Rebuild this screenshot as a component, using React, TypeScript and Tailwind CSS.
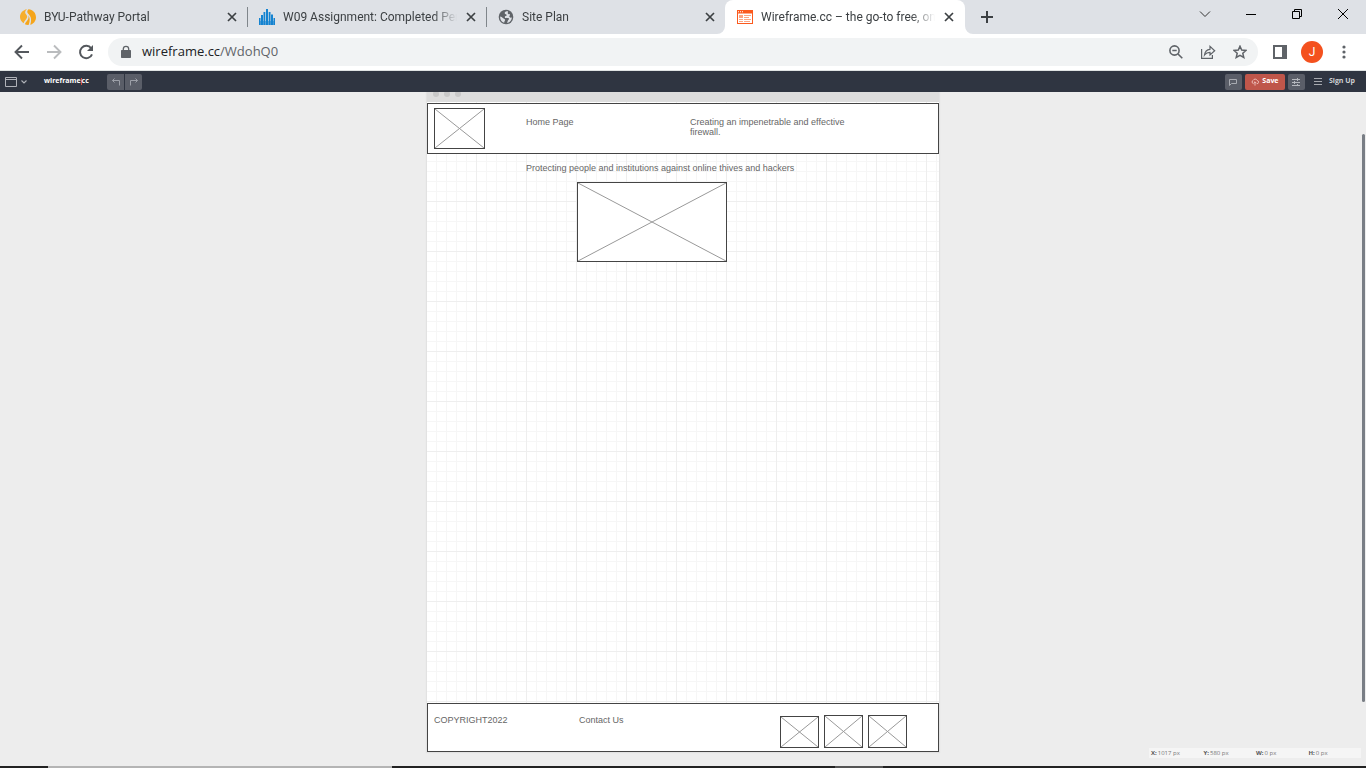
import type { ReactNode } from "react";

type TabProps = { title: string; icon: ReactNode; active?: boolean; separator?: boolean };

function CloseGlyph() {
  return (
    <svg width="10" height="10" viewBox="0 0 10 10" fill="none" stroke="#3c4043" strokeWidth="1.700">
      <path d="M1 1l8 8M9 1l-8 8" />
    </svg>
  );
}

function Tab({ title, icon, active, separator }: TabProps) {
  return (
    <div
      role="tab"
      aria-selected={!!active}
      className={
        active
          ? "relative flex h-full w-60 min-w-0 items-center rounded-t-lg bg-white pr-2.5 pl-3"
          : "relative flex h-full w-[239px] min-w-0 items-center pr-[9px] pl-3"
      }
    >
      <span className="mr-2 flex size-4 shrink-0 items-center justify-center">{icon}</span>
      <span
        className={
          "min-w-0 flex-1 whitespace-nowrap font-['Roboto',sans-serif] text-xs text-[#3c4043] " +
          "[mask-image:linear-gradient(to_right,black_calc(100%-24px),transparent)]"
        }
      >
        {title}
      </span>
      <button aria-label={`Close ${title}`} className="ml-2 flex size-3 shrink-0 items-center justify-center">
        <CloseGlyph />
      </button>
      {separator && <span className="absolute top-[7px] -right-px h-5 w-px bg-[#80868b]" />}
      {active && (
        <>
          <svg className="absolute bottom-0 -left-2" width="8" height="8" viewBox="0 0 8 8">
            <path d="M8 0v8H0a8 8 0 0 0 8-8z" fill="#fff" />
          </svg>
          <svg className="absolute -right-2 bottom-0" width="8" height="8" viewBox="0 0 8 8">
            <path d="M0 0v8h8a8 8 0 0 1-8-8z" fill="#fff" />
          </svg>
        </>
      )}
    </div>
  );
}

function PathwayIcon() {
  return (
    <svg width="16" height="16" viewBox="0 0 16 16">
      <path d="M3.600 14.300A8 8 0 0 1 0 8C0 4 3 .8 7 .2 4.800 2 4.600 3.700 6.200 5.600c1.500 1.800 1.300 3.300-.5 5.200-1.100 1.200-1.800 2.200-2.100 3.500z" fill="#f6ae2d" />
      <path d="M8.500.2C12.700.3 16 3.800 16 8.200c0 3.800-2.500 6.800-5.800 7.600 1.900-5.600.6-8.700-2.200-11.400C6.900 3.200 7 1.600 8.500.2z" fill="#f5a51b" />
      <path d="M8.300 6.200c1.800 2.300 1.900 5.600.3 9.700-1.300.1-2.500-.1-3.700-.6.500-1.600 1.300-2.500 2.300-3.800 1.400-1.800 1.700-3.400 1.100-5.300z" fill="#f5a51b" />
    </svg>
  );
}

function BarsIcon() {
  return (
    <svg width="16" height="16" viewBox="0 0 16 16" fill="#1583d0">
      <path d="M0 9h1.500v7H0zM2 6h2v10H2zM4.500 3h1.800v13H4.500zM7 0h2v16H7zM9.700 3h1.800v13H9.700zM12 5.500h2V16h-2zM14.500 9H16v7h-1.500z" />
      <path d="M0 12h16v4H0z" fillOpacity=".55" />
    </svg>
  );
}

function GlobeIcon() {
  return (
    <svg width="16" height="16" viewBox="0 0 16 16">
      <circle cx="8" cy="8" r="7.300" fill="#5f6368" />
      <path d="M8.800 2.200c-1.800.5-2.300 1.300-2 2.400.4 1 1.800.5 1.900 1.600.1.900-1.900.5-1.900 1.900 0 1 1.800.8 3.200.8 1.200 0 1.400 1.200.5 1.900-.8.700-.8 1.800-1.500 3.300 2.700-.5 4.700-2.800 4.900-5.600-.9.300-2.100.2-2.500-.7-.4-1 .9-1.300.6-2.300-.300-.8-1.900-.1-2.200-1.100-.2-.8.400-1.300.1-2.100zM2.100 7.400c1 .2 2.300.8 3.200 1.900.7.900 1.800.7 1.800 1.800 0 .9-.9 1.100-.9 2.600C3.700 12.900 2 10.700 2.100 7.400z" fill="#dee1e6" />
    </svg>
  );
}

function WireframeIcon() {
  return (
    <svg width="16" height="14" viewBox="0 0 16 14">
      <path d="M0 0h16v14H0z" fill="#fb5a1e" />
      <path d="M1 3.500h14V13H1z" fill="#fff" />
      <path d="M1 1.300h1v1H1zM3 1.300h1v1H3zM5 1.300h1v1H5z" fill="#fff" />
      <path d="M2 5h4v3H2zM7 5h7v1H7zM7 7h5v1H7zM2 9h4v1H2zM7 9h7v1H7zM2 11h4v1H2zM7 11h6v1H7z" fill="#fca582" />
    </svg>
  );
}

function WindowControls() {
  const cell = "flex w-[46px] items-center justify-center";
  return (
    <div className="ml-auto flex h-7 shrink-0">
      <button aria-label="Search tabs" className={cell}>
        <svg width="12" height="12" viewBox="0 0 12 12" fill="none" stroke="#333"><path d="M1 3.500l5 5 5-5" /></svg>
      </button>
      <button aria-label="Minimize" className={cell}>
        <svg width="10" height="10" viewBox="0 0 10 10"><path d="M0 5h10v1H0z" fill="#000" /></svg>
      </button>
      <button aria-label="Restore" className={cell}>
        <svg width="10" height="10" viewBox="0 0 10 10" fill="none" stroke="#000"><path d="M.5 2.500h7v7h-7zM2.500 2.500v-2h7v7h-2" /></svg>
      </button>
      <button aria-label="Close window" className={cell}>
        <svg width="10" height="10" viewBox="0 0 10 10" fill="none" stroke="#000"><path d="M0 0l10 10M10 0L0 10" /></svg>
      </button>
    </div>
  );
}

function TabStrip() {
  return (
    <div className="flex h-[34px] shrink-0 bg-[#dee1e6] pl-2">
      <div role="tablist" className="flex h-full min-w-0">
        <Tab title="BYU-Pathway Portal" icon={<PathwayIcon />} separator />
        <Tab title="W09 Assignment: Completed Per" icon={<BarsIcon />} separator />
        <Tab title="Site Plan" icon={<GlobeIcon />} />
        <Tab title="Wireframe.cc – the go-to free, on" icon={<WireframeIcon />} active />
      </div>
      <button aria-label="New tab" className="ml-2 flex w-7 items-center justify-center">
        <svg width="12" height="12" viewBox="0 0 12 12"><path d="M5 0h2v5h5v2H7v5H5V7H0V5h5z" fill="#3c4043" /></svg>
      </button>
      <WindowControls />
    </div>
  );
}

function AddressBar() {
  const cell = "flex size-8 shrink-0 items-center justify-center";
  return (
    <div className="flex h-9 shrink-0 items-center bg-white px-1.5">
      <button aria-label="Back" className={cell}>
        <svg width="16" height="16" viewBox="0 0 16 16" fill="none" stroke="#54585d" strokeWidth="1.900"><path d="M15 8H2M8 1.500L1.500 8 8 14.500" /></svg>
      </button>
      <button aria-label="Forward" className={cell}>
        <svg width="16" height="16" viewBox="0 0 16 16" fill="none" stroke="#babcbe" strokeWidth="1.900"><path d="M1 8h13M8 1.500L14.500 8 8 14.500" /></svg>
      </button>
      <button aria-label="Reload" className={cell}>
        <svg width="16" height="16" viewBox="0 0 16 16"><path d="M13.200 4.300A6.200 6.200 0 1 0 14 10.300" fill="none" stroke="#54585d" strokeWidth="2" /><path d="M15 1v6H9z" fill="#54585d" /></svg>
      </button>
      <div className="mx-1.5 flex h-7 min-w-0 flex-1 items-center rounded-full bg-[#f1f3f4] pr-0.5 pl-3">
        <svg className="mr-2.5 shrink-0" width="12" height="14" viewBox="0 0 12 14"><path d="M2 5h8c.7 0 1 .4 1 1v6c0 .7-.4 1-1 1H2c-.7 0-1-.4-1-1V6c0-.7.4-1 1-1z" fill="#5f6368" /><path d="M3.300 5.500V4a2.700 2.700 0 0 1 5.400 0v1.500" fill="none" stroke="#5f6368" strokeWidth="1.300" /></svg>
        <a href="#page" className="mr-auto text-[13px] text-[#202124]">
          wireframe.cc<span className="text-[#5f6368]">/WdohQ0</span>
        </a>
        <button aria-label="Zoom" className={cell}>
          <svg width="14" height="14" viewBox="0 0 14 14" fill="none" stroke="#5f6368" strokeWidth="1.600"><circle cx="5.500" cy="5.500" r="4.600" /><path d="M9 9l4.300 4.300M3.300 5.500h4.400" /></svg>
        </button>
        <button aria-label="Share" className={cell}>
          <svg width="16" height="16" viewBox="0 0 16 16" fill="none" stroke="#5f6368" strokeWidth="1.200"><path d="M1.600 5v9.400h10.800V11" /><path d="M4.500 11C5 7 7 5.500 10 5.300V2.300L14.700 6.800 10 11V8.300C7.500 8.300 6 9 4.500 11z" /></svg>
        </button>
        <button aria-label="Bookmark" className={cell}>
          <svg width="14" height="14" viewBox="0 0 14 14" fill="none" stroke="#5f6368" strokeWidth="1.500"><path d="M7 1.200l1.700 3.900 4.300.4-3.200 2.800 1 4.200L7 10.300l-3.800 2.200 1-4.200L1 5.500l4.300-.4z" /></svg>
        </button>
      </div>
      <button aria-label="Side panel" className={cell}>
        <svg width="14" height="14" viewBox="0 0 14 14"><path d="M0 0h14v14H0zM2 2v10h7V2z" fill="#5f6368" fillRule="evenodd" /></svg>
      </button>
      <button aria-label="Profile" className={cell}>
        <span className="flex size-[22px] items-center justify-center rounded-full bg-[#f4511e] font-['Roboto',sans-serif] text-xs text-white">J</span>
      </button>
      <button aria-label="Menu" className={cell}>
        <svg width="4" height="14" viewBox="0 0 4 14" fill="#5f6368"><circle cx="2" cy="2" r="1.600" /><circle cx="2" cy="7" r="1.600" /><circle cx="2" cy="12" r="1.600" /></svg>
      </button>
    </div>
  );
}

function AppBar() {
  const tool = "flex h-4 w-[17px] items-center justify-center bg-[#5a5e68]";
  return (
    <div className="flex h-[22px] shrink-0 items-center border-t border-[#dfe3e3] bg-[#2f3541] pr-[11px] pl-[5px]">
      <button aria-label="Device" className="flex items-center gap-1">
        <svg width="12" height="10" viewBox="0 0 12 10" fill="none" stroke="#b0b3b9"><path d="M.5.500h11v9H.5zM.5 2.500h11" /></svg>
        <svg width="6" height="4" viewBox="0 0 6 4" fill="none" stroke="#b0b3b9" strokeWidth="1.100"><path d="M.5.500L3 3 5.500.500" /></svg>
      </button>
      <a href="#home" className="ml-4 flex w-16 shrink-0 items-center pl-px text-[7px] font-bold text-white">
        wireframe<span className="h-[7px] w-px bg-[#d8503c]" />cc
      </a>
      <div className="flex gap-px overflow-hidden rounded-xs">
        <button aria-label="Undo" className={tool}>
          <svg width="8" height="8" viewBox="0 0 8 8" fill="none" stroke="#9da0a8"><path d="M2.500.500l-2 2 2 2M.5 2.500h7v5" /></svg>
        </button>
        <button aria-label="Redo" className={tool}>
          <svg width="8" height="8" viewBox="0 0 8 8" fill="none" stroke="#9da0a8"><path d="M5.500.500l2 2-2 2M7.500 2.500h-7v5" /></svg>
        </button>
      </div>
      <div className="ml-auto flex items-center gap-[3px]">
        <button aria-label="Comments" className={tool + " rounded-xs"}>
          <svg width="8" height="8" viewBox="0 0 8 8" fill="none" stroke="#a9acb2"><path d="M.5 1.500h7v4h-5l-2 2z" /></svg>
        </button>
        <button className="flex h-4 w-10 items-center justify-center gap-[3px] rounded-xs bg-[#bf564a] text-[7px] font-bold text-white">
          <svg width="8" height="8" viewBox="0 0 8 8" fill="none" stroke="#f0c4bf" strokeWidth=".9"><path d="M2.500 5.700a1.800 1.800 0 0 1-.3-3.400A2.200 2.200 0 0 1 6.200 2.500a1.600 1.600 0 0 1-.5 3.200M4 7.600V3.800M2.700 5.100L4 3.800l1.300 1.300" /></svg>
          Save
        </button>
        <button aria-label="Settings" className={tool + " rounded-xs"}>
          <svg width="8" height="8" viewBox="0 0 8 8" stroke="#b5b8bd"><path d="M0 1.500h8M0 4.500h8M0 7.500h8M5.500 0v3M2.500 3v3M5.500 6v2" /></svg>
        </button>
        <button aria-label="Open menu" className="ml-1 flex w-3 justify-center">
          <svg width="8" height="7" viewBox="0 0 8 7" fill="#a6a9af"><path d="M0 0h8v1H0zM0 3h8v1H0zM0 6h8v1H0z" /></svg>
        </button>
        <a href="#signup" className="ml-0.5 text-[7px] font-bold text-[#cfd1d4]">Sign Up</a>
      </div>
    </div>
  );
}

function ImageBox({ className }: { className: string }) {
  return (
    <div className={"absolute border border-[#444] bg-white " + className}>
      <svg className="block size-full" viewBox="0 0 100 100" preserveAspectRatio="none" stroke="#999" fill="none">
        <path d="M0 0l100 100M100 0L0 100" vectorEffect="non-scaling-stroke" />
      </svg>
    </div>
  );
}

/* Elements on the sheet sit at the coordinates the user dragged them to. */
function Sheet() {
  const label = "absolute text-[9px] leading-[10px] text-[#666]";
  return (
    <main
      id="page"
      className="mx-auto w-[512px] shadow-[0_0_1px_1px_#e2e2e2] font-['Liberation_Sans',Arial,sans-serif]"
    >
      <div className="flex h-2.5 items-start gap-[5px] overflow-hidden bg-[#ddd] pl-1.5">
        <span className="-mt-px size-1.5 rounded-full bg-[#c8c8c8]" />
        <span className="-mt-px size-1.5 rounded-full bg-[#c8c8c8]" />
        <span className="-mt-px size-1.5 rounded-full bg-[#c8c8c8]" />
      </div>
      <div className="relative h-[650px] bg-white bg-[linear-gradient(to_right,transparent_49px,#eeeeee_49px),linear-gradient(to_bottom,transparent_49px,#eeeeee_49px),linear-gradient(to_right,transparent_9px,#f6f6f6_9px),linear-gradient(to_bottom,transparent_9px,#f6f6f6_9px)] bg-[length:50px_50px,50px_50px,10px_10px,10px_10px]">
        <div className="absolute inset-x-0 top-px h-[51px] border border-[#444] bg-white">
          <ImageBox className="top-1 left-1.5 h-[41px] w-[51px]" />
          <p className={label + " top-[13px] left-[98px]"}>Home Page</p>
          <p className={label + " top-[13px] left-[262px] w-44"}>Creating an impenetrable and effective firewall.</p>
        </div>
        <p className={label + " top-[61px] left-[99px] whitespace-nowrap"}>
          Protecting people and institutions against online thives and hackers
        </p>
        <ImageBox className="top-20 left-[150px] h-20 w-[150px]" />
        <div className="absolute inset-x-0 bottom-0 h-[49px] border border-[#444] bg-white">
          <p className={label + " top-[11px] left-1.5"}>COPYRIGHT2022</p>
          <p className={label + " top-[11px] left-[151px]"}>Contact Us</p>
          <ImageBox className="top-3 left-[352px] h-8 w-[39px]" />
          <ImageBox className="top-[11px] left-[396px] h-[33px] w-[39px]" />
          <ImageBox className="top-[11px] left-[440px] h-[33px] w-[39px]" />
        </div>
      </div>
    </main>
  );
}

const readings = [
  ["X", "1017 px"],
  ["Y", "580 px"],
  ["W", "0 px"],
  ["H", "0 px"],
];

export default function App() {
  return (
    <div className="flex h-screen flex-col overflow-hidden bg-[#ededed] font-['Open_Sans','Noto_Sans',sans-serif]">
      <TabStrip />
      <AddressBar />
      <AppBar />
      <div className="relative min-h-0 flex-1 overflow-hidden">
        <Sheet />
        <dl className="absolute right-[5px] bottom-2 grid w-[212px] grid-cols-4 bg-[#f5f5f5] pl-0.5 text-[6px] leading-[10px] text-[#777]">
          {readings.map(([name, value]) => (
            <div key={name} className="flex gap-px">
              <dt className="font-bold text-[#555]">{name}:</dt>
              <dd>{value}</dd>
            </div>
          ))}
        </dl>
        <div className="absolute top-[42px] right-px h-[568px] w-[3px] rounded-full bg-[#797e85]" />
      </div>
      <div className="flex h-0.5 shrink-0 bg-[#222]">
        <span className="ml-12 w-[344px] bg-[#b4b4b4]" />
        <span className="ml-[443px] w-12 bg-[#555]" />
      </div>
    </div>
  );
}
